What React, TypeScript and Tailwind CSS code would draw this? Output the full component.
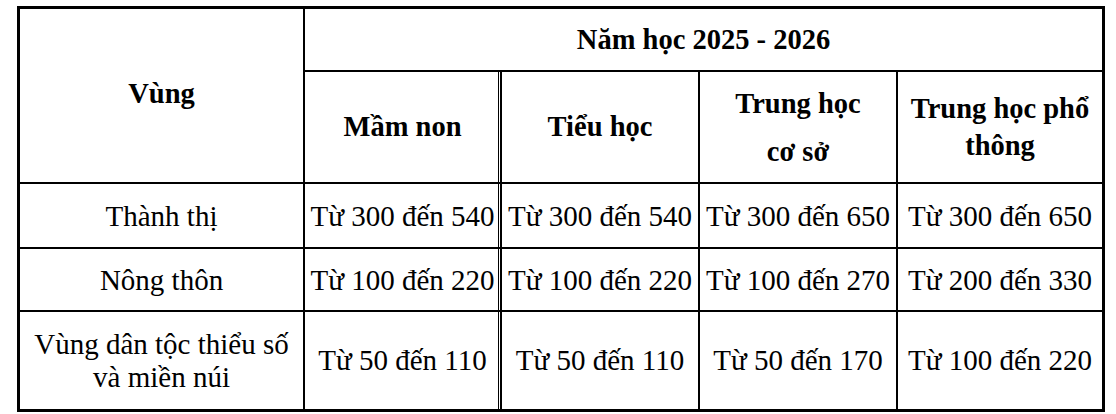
import React from "react";

const rows = [
  { region: "Thành thị", vals: ["Từ 300 đến 540", "Từ 300 đến 540", "Từ 300 đến 650", "Từ 300 đến 650"] },
  { region: "Nông thôn", vals: ["Từ 100 đến 220", "Từ 100 đến 220", "Từ 100 đến 270", "Từ 200 đến 330"] },
];

const cell = "bg-white flex items-center justify-center text-center font-['Liberation_Serif',serif]";
const dbl = "shadow-[inset_-1px_0_0_#fff,inset_-2px_0_0_#000]";

export default function App() {
  return (
    <div className="w-[1116px] h-[414px] bg-white pl-[17px] pt-[6px] text-black font-['Liberation_Serif',serif]">
      <div className="grid w-[1088px] bg-black p-[3px] gap-[2px] grid-cols-[283px_195px_196px_196px_204px] grid-rows-[61px_110px_63px_61px_97px]">
        <div className={`${cell} row-span-2 font-bold text-[28.5px] leading-none pb-[2px]`}>Vùng</div>
        <div className={`${cell} col-span-4 font-bold text-[28.5px] leading-none pt-[1px]`}>Năm học 2025 - 2026</div>
        <div className={`${cell} ${dbl} font-bold text-[28.5px] leading-none`}>Mầm non</div>
        <div className={`${cell} font-bold text-[28.5px] leading-none`}>Tiểu học</div>
        <div className={`${cell} font-bold text-[28.5px] leading-[48px] flex-col pt-[2px]`}>
          <span>Trung học</span>
          <span>cơ sở</span>
        </div>
        <div className={`${cell} font-bold text-[28.5px] leading-[37px] flex-col`}>
          <span>Trung học phổ</span>
          <span>thông</span>
        </div>
        {rows.map((r) => (
          <React.Fragment key={r.region}>
            <div className={`${cell} text-[29px] leading-none pt-[2px]`}>{r.region}</div>
            {r.vals.map((v, i) => (
              <div key={i} className={`${cell} ${i === 0 ? dbl : ""} text-[29px] leading-none whitespace-nowrap pt-[2px]`}>{v}</div>
            ))}
          </React.Fragment>
        ))}
        <div className={`${cell} text-[29px] leading-[33px] flex-col`}>
          <span>Vùng dân tộc thiểu số</span>
          <span>và miền núi</span>
        </div>
        <div className={`${cell} ${dbl} text-[29px] leading-none`}>Từ 50 đến 110</div>
        <div className={`${cell} text-[29px] leading-none`}>Từ 50 đến 110</div>
        <div className={`${cell} text-[29px] leading-none`}>Từ 50 đến 170</div>
        <div className={`${cell} text-[29px] leading-none`}>Từ 100 đến 220</div>
      </div>
    </div>
  );
}
